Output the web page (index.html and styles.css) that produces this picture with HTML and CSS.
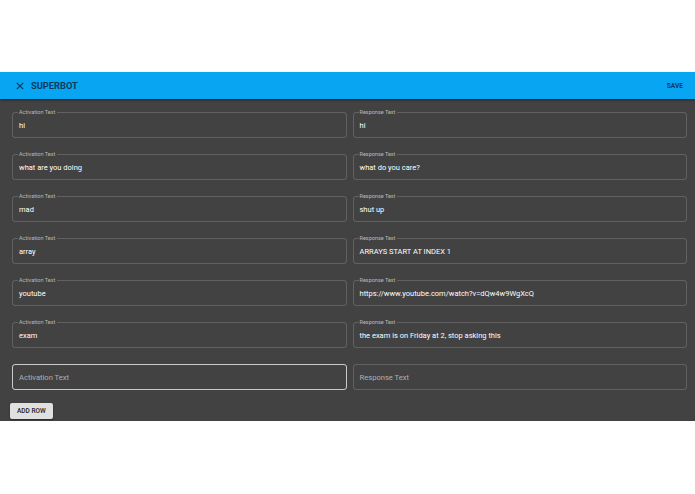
FILE: index.html
```html
<!DOCTYPE html>
<html>
<head>
<meta charset="utf-8">
<link rel="stylesheet" href="styles.css">
</head>
<body>
<div class="top-space"></div>
<header class="appbar">
  <div class="appbar-left">
    <svg class="close-icon" viewBox="0 0 10 10" width="8" height="8"><path d="M1 1 L9 9 M9 1 L1 9" stroke="currentColor" stroke-width="1.5" fill="none"/></svg>
    <span class="title">SUPERBOT</span>
  </div>
  <span class="save">SAVE</span>
</header>
<main class="content">
  <div class="grid">
    <div class="field"><span class="label">Activation Text</span><span class="value">hi</span></div>
    <div class="field"><span class="label">Response Text</span><span class="value">hi</span></div>
    <div class="field"><span class="label">Activation Text</span><span class="value">what are you doing</span></div>
    <div class="field"><span class="label">Response Text</span><span class="value">what do you care?</span></div>
    <div class="field"><span class="label">Activation Text</span><span class="value">mad</span></div>
    <div class="field"><span class="label">Response Text</span><span class="value">shut up</span></div>
    <div class="field"><span class="label">Activation Text</span><span class="value">array</span></div>
    <div class="field"><span class="label">Response Text</span><span class="value">ARRAYS START AT INDEX 1</span></div>
    <div class="field"><span class="label">Activation Text</span><span class="value">youtube</span></div>
    <div class="field"><span class="label">Response Text</span><span class="value">https://www.youtube.com/watch?v=dQw4w9WgXcQ</span></div>
    <div class="field"><span class="label">Activation Text</span><span class="value">exam</span></div>
    <div class="field"><span class="label">Response Text</span><span class="value">the exam is on Friday at 2, stop asking this</span></div>
    <div class="field empty hover"><span class="placeholder">Activation Text</span></div>
    <div class="field empty"><span class="placeholder">Response Text</span></div>
  </div>
  <button class="add-btn">ADD ROW</button>
</main>
</body>
</html>
```

FILE: styles.css
```css
html, body {
  margin: 0;
  padding: 0;
  background: #ffffff;
  font-family: Roboto, "Liberation Sans", sans-serif;
}
.top-space {
  height: 72px;
}
.appbar {
  position: relative;
  z-index: 2;
  height: 27px;
  background: #08a6f2;
  display: flex;
  align-items: center;
  justify-content: space-between;
  padding: 0 12px 0 16px;
  box-shadow: 0 1px 2px rgba(0,0,0,0.55);
  color: #0c3a5c;
}
.appbar-left {
  display: flex;
  align-items: center;
  gap: 7px;
}
.close-icon {
  display: block;
  width: 8px;
  height: 8px;
}
.title {
  font-size: 9.3px;
  font-weight: 700;
}
.save {
  font-size: 6.6px;
  font-weight: 700;
}
.content {
  background: #424242;
  padding: 13px 8px 2px 12px;
}
.grid {
  display: grid;
  grid-template-columns: 1fr 1fr;
  column-gap: 6px;
  row-gap: 16px;
}
.field {
  position: relative;
  height: 26px;
  box-sizing: border-box;
  border: 1px solid rgba(255,255,255,0.17);
  border-radius: 3px;
  display: flex;
  align-items: center;
  padding: 0 6px;
}
.field .label {
  position: absolute;
  top: -4px;
  left: 5px;
  padding: 0 2px 0 1px;
  background: #424242;
  font-size: 5.5px;
  line-height: 7px;
  color: rgba(255,255,255,0.62);
}
.field .value {
  font-size: 7.5px;
  color: #ffffff;
  margin-top: 1px;
}
.field .placeholder {
  font-size: 7.6px;
  color: rgba(255,255,255,0.58);
  margin-top: 1px;
}
.field.hover {
  border-color: rgba(255,255,255,0.72);
}
.add-btn {
  display: block;
  margin: 13px 0 0 -2px;
  height: 16px;
  padding: 0 7px;
  border: none;
  border-radius: 2px;
  background: #e0e0e0;
  color: #222;
  font-family: Roboto, "Liberation Sans", sans-serif;
  font-size: 6.5px;
  font-weight: 500;
  box-shadow: 0 1px 2px rgba(0,0,0,0.4);
}
```
